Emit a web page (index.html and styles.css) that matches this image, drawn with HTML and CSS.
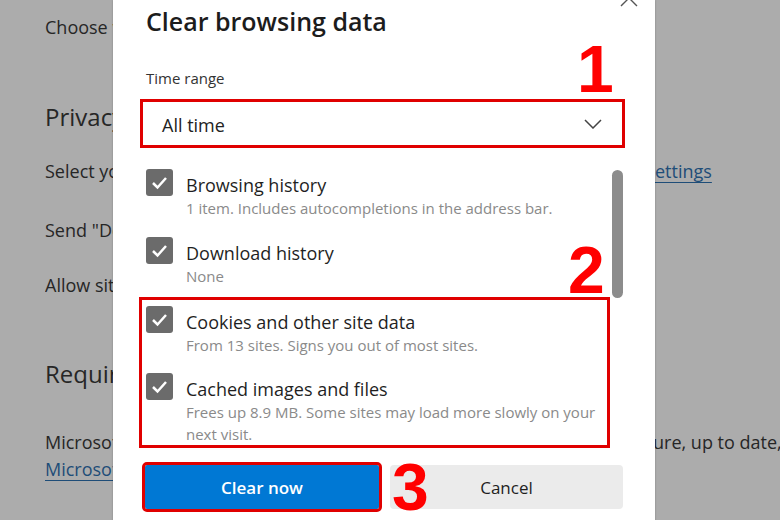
FILE: index.html
```html
<!DOCTYPE html>
<html lang="en">
<head>
<meta charset="utf-8">
<title>Clear browsing data</title>
<link rel="stylesheet" href="styles.css">
</head>
<body>
<div class="page">
  <div class="bg-line l1"><span class="bg-left">Choose what</span></div>
  <h2 class="bg-head h1"><span class="bg-left">Privacy</span></h2>
  <div class="bg-row r1"><span class="bg-left">Select your</span><a class="bg-link">ettings</a></div>
  <div class="bg-line l3"><span class="bg-left">Send "Do</span></div>
  <div class="bg-line l4"><span class="bg-left">Allow sites</span></div>
  <h2 class="bg-head h2"><span class="bg-left">Required</span></h2>
  <div class="bg-row r2"><span class="bg-left">Microsoft</span><span class="bg-right">ure, up to date,</span></div>
  <div class="bg-line l6"><a class="bg-link bg-left">Microsoft</a></div>
</div>

<div class="dialog">
  <svg class="close" width="18" height="18" viewBox="0 0 18 18"><path d="M1 1L17 17M17 1L1 17" stroke="#555" stroke-width="1.4" fill="none"/></svg>
  <h1 class="title">Clear browsing data</h1>
  <div class="label">Time range</div>
  <div class="select">
    <span class="select-text">All time</span>
    <svg class="chev" width="18" height="10" viewBox="0 0 18 10"><path d="M1 1L9 9L17 1" stroke="#444" stroke-width="1.5" fill="none"/></svg>
  </div>
  <div class="list">
    <div class="items">
      <div class="item">
        <span class="cb"><svg width="27" height="27" viewBox="0 0 27 27"><path d="M7 14L11.5 18.5L20 9" stroke="#fff" stroke-width="2.5" fill="none"/></svg></span>
        <div class="item-text">
          <div class="item-title">Browsing history</div>
          <div class="item-sub">1 item. Includes autocompletions in the address bar.</div>
        </div>
      </div>
      <div class="item before-group">
        <span class="cb"><svg width="27" height="27" viewBox="0 0 27 27"><path d="M7 14L11.5 18.5L20 9" stroke="#fff" stroke-width="2.5" fill="none"/></svg></span>
        <div class="item-text">
          <div class="item-title">Download history</div>
          <div class="item-sub">None</div>
        </div>
      </div>
      <div class="group">
        <div class="item">
          <span class="cb"><svg width="27" height="27" viewBox="0 0 27 27"><path d="M7 14L11.5 18.5L20 9" stroke="#fff" stroke-width="2.5" fill="none"/></svg></span>
          <div class="item-text">
            <div class="item-title">Cookies and other site data</div>
            <div class="item-sub">From 13 sites. Signs you out of most sites.</div>
          </div>
        </div>
        <div class="item">
          <span class="cb"><svg width="27" height="27" viewBox="0 0 27 27"><path d="M7 14L11.5 18.5L20 9" stroke="#fff" stroke-width="2.5" fill="none"/></svg></span>
          <div class="item-text">
            <div class="item-title">Cached images and files</div>
            <div class="item-sub nowrap">Frees up 8.9 MB. Some sites may load more slowly on your<br>next visit.</div>
          </div>
        </div>
      </div>
    </div>
    <div class="scrollbar"></div>
  </div>
  <div class="buttons">
    <button class="btn primary">Clear now</button>
    <button class="btn secondary">Cancel</button>
  </div>
</div>

<div class="annot n1">1</div>
<div class="annot n2">2</div>
<div class="annot n3">3</div>
</body>
</html>
```

FILE: styles.css
```css
html, body {
  margin: 0;
  padding: 0;
}
body {
  width: 780px;
  height: 520px;
  overflow: hidden;
  background: #acacac;
  font-family: "Open Sans", "Noto Sans", sans-serif;
  position: relative;
}

/* background page */
.page {
  padding: 15px 0 0 45px;
  color: #262626;
}
.bg-line, .bg-row {
  font-size: 18px;
  line-height: 24px;
  white-space: nowrap;
}
.bg-left {
  display: block;
  width: 68px;
  overflow: hidden;
  white-space: nowrap;
}
.bg-row {
  display: grid;
  grid-template-columns: 610px 1fr;
}
.r2 {
  grid-template-columns: 608px 1fr;
}
.bg-right {
  white-space: nowrap;
}
.bg-head {
  margin: 0;
  font-size: 24px;
  line-height: 32px;
  font-weight: 400;
  white-space: nowrap;
}
.bg-link {
  color: #1e4d78;
  text-decoration: underline;
  text-underline-offset: 4px;
}
.h1 { margin-top: 62px; }
.r1 { margin-top: 26px; }
.l3 { margin-top: 35px; }
.l4 { margin-top: 31px; }
.h2 { margin-top: 61px; }
.r2 { margin-top: 40px; }
.l6 { margin-top: 3px; }

/* dialog */
.dialog {
  position: absolute;
  left: 113px;
  top: 0;
  width: 542px;
  height: 540px;
  box-sizing: border-box;
  background: #fff;
  padding: 6px 32px 0 33px;
  color: #1f1f1f;
  box-shadow: 0 0 2px rgba(0,0,0,0.25);
}
.close {
  position: absolute;
  left: 507px;
  top: -11px;
}
.title {
  margin: 0;
  font-size: 25px;
  line-height: 30px;
  font-weight: 600;
  color: #1c1c1c;
}
.label {
  margin-top: 32px;
  font-size: 15px;
  line-height: 20px;
  color: #333;
}
.select {
  margin: 11px 0 0 -6px;
  width: 485px;
  height: 49px;
  box-sizing: border-box;
  border: 3px solid #e00000;
  display: flex;
  align-items: center;
  justify-content: space-between;
  padding: 3px 20px 0 19px;
}
.select-text {
  font-size: 18px;
  line-height: 24px;
  color: #222;
}
.chev {
  margin-top: -2px;
}
.list {
  margin: 21px 0 0 -7px;
  height: 280px;
  display: flex;
  overflow: hidden;
}
.items {
  width: 471px;
  box-sizing: border-box;
  padding-left: 7px;
  flex: none;
}
.item {
  display: flex;
  gap: 13px;
  align-items: flex-start;
  margin-bottom: 18px;
}
.item.before-group {
  margin-bottom: 10px;
}
.cb {
  width: 27px;
  height: 27px;
  border-radius: 3px;
  background: #6b6b6b;
  flex: none;
  display: block;
}
.cb svg { display: block; }
.item-text {
  padding-top: 4px;
}
.item-title {
  font-size: 18px;
  line-height: 24px;
  color: #1f1f1f;
}
.item-sub {
  font-size: 15px;
  line-height: 22px;
  color: #8a8a8a;
}
.nowrap {
  white-space: nowrap;
}
.group {
  margin: 0 0 0 -7px;
  width: 471px;
  box-sizing: border-box;
  border: 3px solid #e00000;
  padding: 6px 0 0 4px;
  overflow: hidden;
}
.group .item:first-child { margin-bottom: 17px; }
.group .item:last-child { margin-bottom: 0; }
.scrollbar {
  width: 11px;
  height: 128px;
  margin: 1px 0 0 2px;
  border-radius: 6px;
  background: #8c8c8c;
  flex: none;
}
.buttons {
  margin: 16px 0 0 -1px;
  display: flex;
  gap: 11px;
}
.btn {
  height: 44px;
  border: none;
  font-family: "Open Sans", "Noto Sans", sans-serif;
  font-size: 17px;
  padding: 0;
}
.primary {
  width: 234px;
  background: #0078d4;
  color: #fff;
  font-weight: 600;
  border-radius: 2px;
  outline: 3px solid #e00000;
}
.secondary {
  width: 233px;
  background: #ebebeb;
  color: #1f1f1f;
  border-radius: 4px;
}

/* annotation numbers */
.annot {
  position: absolute;
  font-family: "Liberation Sans", Arial, sans-serif;
  font-weight: 700;
  font-size: 66px;
  line-height: 1;
  color: #ff0000;
}
.n1 { left: 577px; top: 36px; }
.n2 { left: 568px; top: 237px; }
.n3 { left: 392px; top: 454px; }
```
